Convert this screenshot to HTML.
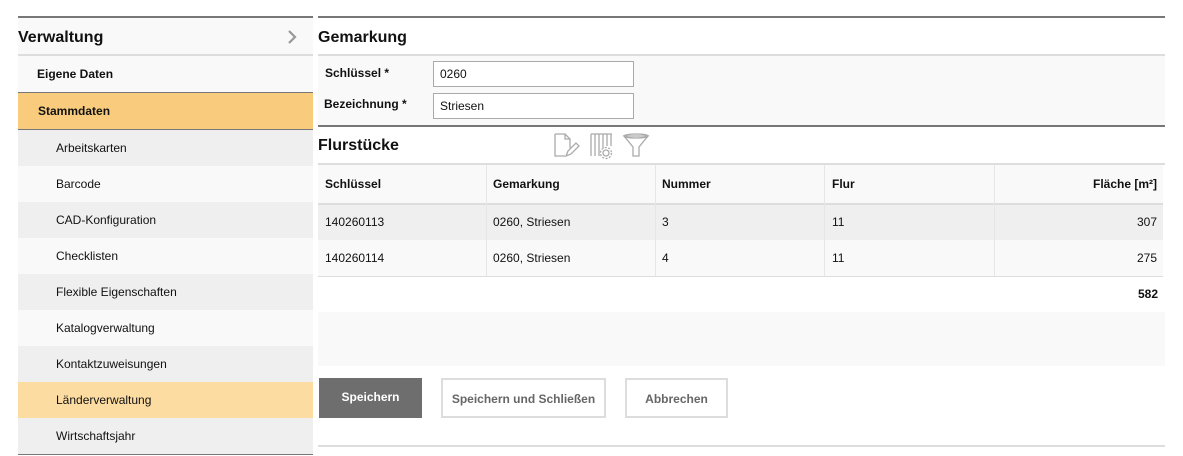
<!DOCTYPE html>
<html><head><meta charset="utf-8"><style>
*{margin:0;padding:0;box-sizing:border-box}
body{width:1183px;height:456px;background:#fff;font-family:"Liberation Sans",Arial,sans-serif;color:#111;position:relative;overflow:hidden}
.a{position:absolute}
.nav{left:18px;width:295px;height:36px;font-size:12px;line-height:36px}
.sub{padding-left:38px}
.th{font-weight:bold}
.cell{position:absolute;font-size:12px;line-height:36px}
.btn{position:absolute;top:378px;height:40px;line-height:38px;font-size:12px;font-weight:bold;text-align:center}
</style></head><body>
<!-- sidebar -->
<div class="a" style="left:18px;top:16px;width:295px;height:2px;background:#777"></div>
<div class="a" style="left:18px;top:18px;width:295px;height:36px;background:#f9f9f9;font-size:16px;font-weight:bold;line-height:39px">Verwaltung</div>
<svg class="a" style="left:286px;top:29px" width="12" height="16" viewBox="0 0 12 16"><path d="M3 2l6 6-6 6" fill="none" stroke="#999" stroke-width="2.2"/></svg>
<div class="a" style="left:18px;top:54px;width:295px;height:2px;background:#ddd"></div>
<div class="a nav" style="top:56px;background:#f9f9f9;font-weight:bold;padding-left:19px">Eigene Daten</div>
<div class="a" style="left:18px;top:92px;width:295px;height:1px;background:#777"></div>
<div class="a nav" style="top:93px;background:#f9cc7d;font-weight:bold;padding-left:20px">Stammdaten</div>
<div class="a" style="left:18px;top:129px;width:295px;height:1px;background:#777"></div>
<div class="a nav sub" style="top:130px;background:#efefef">Arbeitskarten</div>
<div class="a nav sub" style="top:166px;background:#f9f9f9">Barcode</div>
<div class="a nav sub" style="top:202px;background:#efefef">CAD-Konfiguration</div>
<div class="a nav sub" style="top:238px;background:#f9f9f9">Checklisten</div>
<div class="a nav sub" style="top:274px;background:#efefef">Flexible Eigenschaften</div>
<div class="a nav sub" style="top:310px;background:#f9f9f9">Katalogverwaltung</div>
<div class="a nav sub" style="top:346px;background:#efefef">Kontaktzuweisungen</div>
<div class="a nav sub" style="top:382px;background:#fcdca1">Länderverwaltung</div>
<div class="a nav sub" style="top:418px;background:#efefef">Wirtschaftsjahr</div>
<div class="a" style="left:18px;top:454px;width:295px;height:1px;background:#777"></div>
<!-- main -->
<div class="a" style="left:318px;top:16px;width:847px;height:2px;background:#777"></div>
<div class="a" style="left:318px;top:18px;font-size:16px;font-weight:bold;line-height:39px">Gemarkung</div>
<div class="a" style="left:318px;top:54px;width:847px;height:2px;background:#ddd"></div>
<div class="a" style="left:318px;top:56px;width:847px;height:69px;background:#f9f9f9"></div>
<div class="a" style="left:325px;top:66px;font-size:12px;font-weight:bold">Schlüssel *</div>
<div class="a" style="left:324px;top:97px;font-size:12px;font-weight:bold">Bezeichnung *</div>
<div class="a" style="left:433px;top:61px;width:201px;height:26px;border:1px solid #aaa;background:#fff;font-size:12px;line-height:24px;padding-left:6px">0260</div>
<div class="a" style="left:433px;top:93px;width:201px;height:26px;border:1px solid #aaa;background:#fff;font-size:12px;line-height:24px;padding-left:6px">Striesen</div>
<div class="a" style="left:318px;top:125px;width:847px;height:2px;background:#777"></div>
<div class="a" style="left:318px;top:127px;font-size:16px;font-weight:bold;line-height:38px">Flurstücke</div>
<svg class="a" style="left:552px;top:132px" width="100" height="28" viewBox="0 0 100 28" fill="none" stroke="#aaa" stroke-width="1.3">
<path d="M3 2h10l5 5v9M3 2v22h10M13 2v5h5"/><path d="M14 24l2-5 8-8 3 3-8 8z"/>
<path d="M39 2v22M43 2v22M47 2v22M51 2v14M55 2v12M59 2v12M39 2h21"/><circle cx="54" cy="21" r="3"/><circle cx="54" cy="21" r="5.5" stroke-dasharray="2 1.5"/>
<path d="M72 4h24l-9 11v9h-6v-9z"/><ellipse cx="84" cy="4" rx="12" ry="2"/>
</svg>
<div class="a" style="left:318px;top:163px;width:847px;height:2px;background:#ddd"></div>
<div class="a" style="left:318px;top:165px;width:845px;height:38px;background:#f9f9f9"></div>
<div class="a" style="left:318px;top:203px;width:845px;height:2px;background:#ddd"></div>
<div class="a" style="left:318px;top:205px;width:845px;height:35px;background:#efefef"></div>
<div class="a" style="left:318px;top:240px;width:845px;height:36px;background:#f9f9f9"></div>
<div class="a" style="left:318px;top:276px;width:845px;height:1px;background:#ddd"></div>
<div class="a" style="left:486px;top:165px;width:1px;height:111px;background:#e6e6e6"></div>
<div class="a" style="left:655px;top:165px;width:1px;height:111px;background:#e6e6e6"></div>
<div class="a" style="left:824px;top:165px;width:1px;height:111px;background:#e6e6e6"></div>
<div class="a" style="left:994px;top:165px;width:1px;height:111px;background:#e6e6e6"></div>
<div class="cell th" style="left:325px;top:166px">Schlüssel</div>
<div class="cell th" style="left:493px;top:166px">Gemarkung</div>
<div class="cell th" style="left:662px;top:166px">Nummer</div>
<div class="cell th" style="left:832px;top:166px">Flur</div>
<div class="cell th" style="right:26px;top:166px">Fläche [m²]</div>
<div class="cell" style="left:325px;top:204px">140260113</div>
<div class="cell" style="left:493px;top:204px">0260, Striesen</div>
<div class="cell" style="left:662px;top:204px">3</div>
<div class="cell" style="left:832px;top:204px">11</div>
<div class="cell" style="right:26px;top:204px">307</div>
<div class="cell" style="left:325px;top:240px">140260114</div>
<div class="cell" style="left:493px;top:240px">0260, Striesen</div>
<div class="cell" style="left:662px;top:240px">4</div>
<div class="cell" style="left:832px;top:240px">11</div>
<div class="cell" style="right:26px;top:240px">275</div>
<div class="cell th" style="right:25px;top:276px">582</div>
<div class="a" style="left:318px;top:312px;width:847px;height:54px;background:#f9f9f9"></div>
<div class="btn" style="left:319px;width:103px;background:#6e6e6e;color:#fff">Speichern</div>
<div class="btn" style="left:441px;width:165px;border:2px solid #ddd;color:#666">Speichern und Schließen</div>
<div class="btn" style="left:625px;width:103px;border:2px solid #ddd;color:#666">Abbrechen</div>
<div class="a" style="left:318px;top:445px;width:847px;height:2px;background:#ddd"></div>
</body></html>
